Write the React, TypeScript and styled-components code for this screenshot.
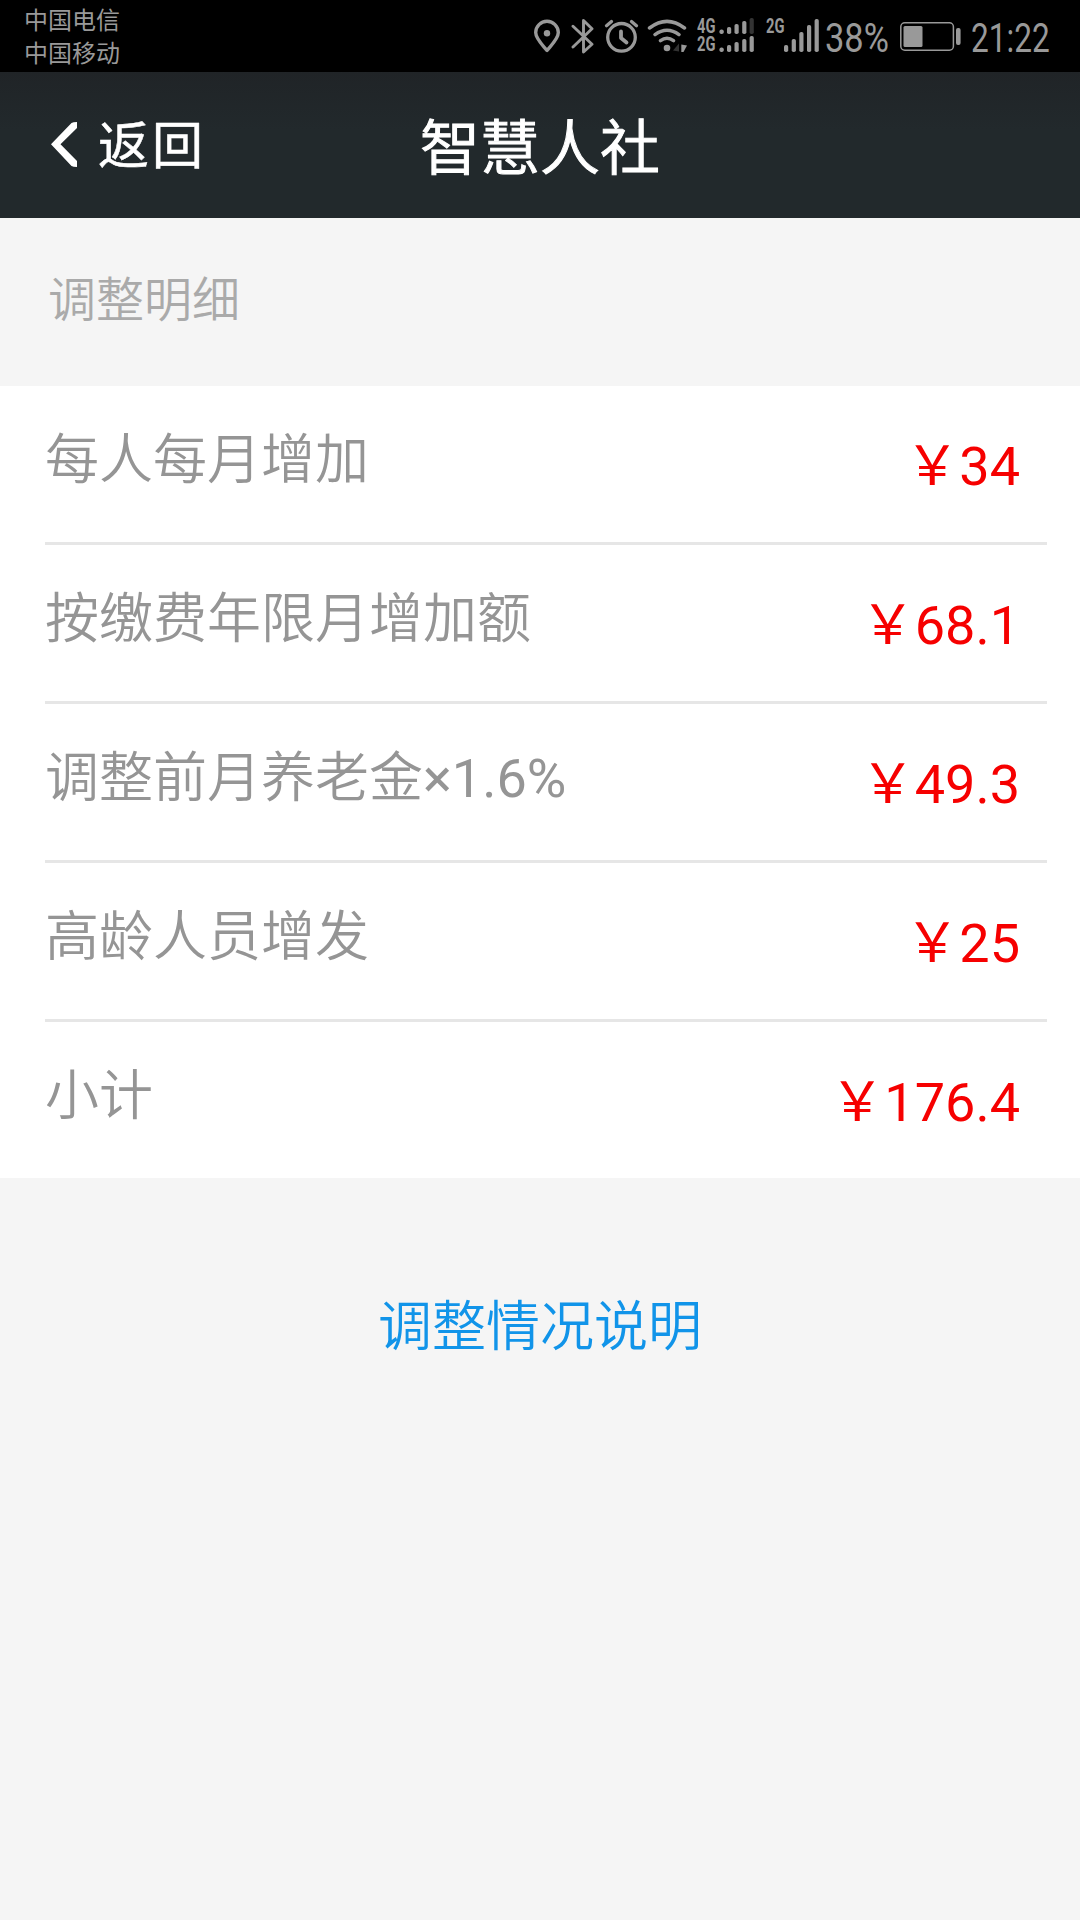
import React from 'react';
import styled, { createGlobalStyle } from 'styled-components';

const GlobalStyle = createGlobalStyle`
  *, *::before, *::after { box-sizing: border-box; }
  body {
    margin: 0;
    background: #f5f5f5;
    font-family: Roboto, 'Noto Sans CJK SC', sans-serif;
  }
`;

const Screen = styled.div`
  display: flex;
  flex-direction: column;
  width: 1080px;
  height: 1920px;
  overflow: hidden;
  background: #f5f5f5;
`;

const StatusBar = styled.div`
  display: flex;
  justify-content: space-between;
  height: 72px;
  padding: 0 31px 0 24px;
  background: #000;
  color: #999;
`;

const Carriers = styled.div`
  padding-top: 2px;
  font: 400 24px/33px 'Noto Sans CJK SC', sans-serif;
  white-space: nowrap;
`;

const StatusIcons = styled.div`
  display: flex;
  align-items: flex-start;
  padding-top: 17px;
`;

const Glyph = styled.svg<{ $gap?: number }>`
  display: block;
  flex: none;
  margin-left: ${(p) => p.$gap ?? 0}px;
  fill: none;
  stroke: #999;
  stroke-linecap: round;
  stroke-linejoin: round;
`;

const StatusText = styled.div<{ $width: number; $gap: number; $scale: number }>`
  flex: none;
  width: ${(p) => p.$width}px;
  margin-left: ${(p) => p.$gap}px;
  padding-top: 1px;
  font: 400 40px/41px Roboto, sans-serif;
  white-space: nowrap;

  span {
    display: inline-block;
    transform: scaleX(${(p) => p.$scale});
    transform-origin: 0 0;
  }
`;

const NetworkTypes = styled.div<{ $gap: number; $width: number }>`
  display: flex;
  flex-direction: column;
  flex: none;
  width: ${(p) => p.$width}px;
  margin-left: ${(p) => p.$gap}px;
  font: 700 21px/18px Roboto, sans-serif;

  span {
    transform: scaleX(0.7);
    transform-origin: 0 0;
  }
`;

const Header = styled.header`
  display: grid;
  grid-template-columns: 1fr auto 1fr;
  height: 146px;
  padding-left: 51px;
  background: linear-gradient(#202427, #22292c 40%);
  color: #fff;
  font-family: 'Noto Sans CJK SC', sans-serif;
  white-space: nowrap;
`;

const BackButton = styled.button`
  display: flex;
  align-items: flex-start;
  gap: 21px;
  margin: 0;
  padding: 34px 0 0;
  border: 0;
  background: none;
  color: inherit;
  font: 400 51px/72px 'Noto Sans CJK SC', sans-serif;
  letter-spacing: 3px;
  -webkit-text-stroke: 0.5px #fff;

  svg { margin-top: 16px; }
`;

const Title = styled.h1`
  margin: 0;
  padding: 36px 0 0;
  margin-left: -51px;
  font-size: 60px;
  font-weight: 350;
  line-height: 72px;
  -webkit-text-stroke: 1px #fff;
  stroke-linejoin: round;
`;

const SectionLabel = styled.h2`
  height: 168px;
  margin: 0;
  padding: 47px 48px 0;
  color: #aaa;
  font-size: 48px;
  font-weight: 350;
  line-height: 72px;
`;

const List = styled.dl`
  margin: 0;
  padding: 0 33px 0 45px;
  background: #fff;
`;

const Row = styled.div`
  display: flex;
  justify-content: space-between;
  height: 159px;
  padding-right: 27px;
  border-bottom: 3px solid #e6e6e6;
  font-size: 54px;
  line-height: 72px;

  &:last-child {
    height: 156px;
    border-bottom: 0;
  }
`;

const Label = styled.dt`
  padding-top: 39px;
  color: #959595;
  font-weight: 350;
`;

const Latin = styled.span`
  font-weight: 400;
`;

const Amount = styled.dd`
  margin: 0;
  padding-top: 45px;
  color: #f60000;
  font-weight: 400;
`;

const ExplainLink = styled.a`
  align-self: center;
  margin-top: 114px;
  color: #1194e9;
  font-size: 54px;
  font-weight: 350;
  line-height: 72px;
`;

const items = [
  { label: '每人每月增加', amount: '34' },
  { label: '按缴费年限月增加额', amount: '68.1' },
  { label: '调整前月养老金', factor: '×1.6%', amount: '49.3' },
  { label: '高龄人员增发', amount: '25' },
  { label: '小计', amount: '176.4' },
];

function Bar({ x, top, bottom, off }: { x: number; top: number; bottom: number; off?: boolean }) {
  return <rect x={x} y={top} width={4.2} height={bottom - top} rx={1.8} fill={off ? '#333' : '#999'} stroke="none" />;
}

export default function App() {
  return (
    <>
      <GlobalStyle />
      <Screen>
        <StatusBar>
          <Carriers>
            <div>中国电信</div>
            <div>中国移动</div>
          </Carriers>
          <StatusIcons>
            <Glyph width="27" height="37" viewBox="534 17 27 37" strokeWidth="3.4">
              <path d="M547 50.5C543 45.5 535.7 39 535.7 32.6a11.3 11.3 0 0 1 22.6 0C558.3 39 551 45.5 547 50.5Z" />
              <circle cx="547" cy="33.3" r="3.2" fill="#999" stroke="none" />
            </Glyph>
            <Glyph $gap={10} width="23" height="37" viewBox="571 17 23 37" strokeWidth="2.9">
              <path d="M573 26.3 592 44.2 583.5 52V20.5L592 28.8 573 47" />
            </Glyph>
            <Glyph $gap={10} width="35" height="37" viewBox="604 17 35 37" strokeWidth="3.3">
              <circle cx="621.5" cy="37.3" r="13.8" />
              <path d="M606.5 25.8 611.5 21.6M631.5 21.6 636.5 25.8" />
              <path d="M621 31.5V38L626.5 42.5" strokeWidth="3.8" />
            </Glyph>
            <Glyph $gap={8} width="41" height="37" viewBox="647 17 41 37" strokeWidth="3.5">
              <path d="M649.5 28Q667 14.8 684.5 28M655 34.6Q667 26 679 34.6M660.5 40.7Q667 35.8 673.5 40.7" />
              <circle cx="667" cy="48" r="3.3" fill="#999" stroke="none" />
              <path d="M673 50.5 679 43.5V51.5Z" fill="#333" stroke="none" />
              <path d="M681.3 44.5 687 45.5 683.5 52H681.3Z" fill="#999" stroke="none" />
            </Glyph>
            <NetworkTypes $gap={9} $width={22}>
              <span>4G</span>
              <span>2G</span>
            </NetworkTypes>
            <Glyph width="36" height="37" viewBox="719 17 36 37">
              <Bar x={719.5} top={29.5} bottom={34} />
              <Bar x={727} top={27} bottom={34} />
              <Bar x={734.5} top={24} bottom={34} />
              <Bar x={742.2} top={21} bottom={34} />
              <Bar x={749.6} top={18} bottom={34} off />
              <Bar x={719.5} top={47.5} bottom={52} />
              <Bar x={727} top={45} bottom={52} />
              <Bar x={734.5} top={42} bottom={52} />
              <Bar x={742.2} top={39} bottom={52} />
              <Bar x={749.6} top={36} bottom={52} />
            </Glyph>
            <NetworkTypes $gap={11} $width={18}>
              <span>2G</span>
            </NetworkTypes>
            <Glyph width="36" height="37" viewBox="784 17 36 37">
              <Bar x={784} top={45} bottom={52} />
              <Bar x={791.7} top={39} bottom={52} />
              <Bar x={799.3} top={32} bottom={52} />
              <Bar x={807} top={25} bottom={52} />
              <Bar x={814.6} top={19} bottom={52} />
            </Glyph>
            <StatusText $gap={5} $width={75} $scale={0.86}>
              <span>38%</span>
            </StatusText>
            <Glyph width="61" height="37" viewBox="900 17 61 37">
              <rect x="900.8" y="22.8" width="52.6" height="27.4" rx="4" strokeWidth="1.5" />
              <rect x="903.5" y="26" width="19" height="21" rx="1.5" fill="#999" stroke="none" />
              <rect x="956" y="28" width="4.6" height="17" rx="2" fill="#999" stroke="none" />
            </Glyph>
            <StatusText $gap={10} $width={78} $scale={0.79}>
              <span>21:22</span>
            </StatusText>
          </StatusIcons>
        </StatusBar>

        <Header>
          <BackButton>
            <svg width="26" height="45" viewBox="0 0 26 45" fill="#fff">
              <path d="M0 22.3 20.5 1Q22 0 26 0V6L9.5 22.3 26 39V45Q22 45 20.5 44Z" />
            </svg>
            返回
          </BackButton>
          <Title>智慧人社</Title>
        </Header>

        <SectionLabel>调整明细</SectionLabel>

        <List>
          {items.map((item) => (
            <Row key={item.label}>
              <Label>
                {item.label}
                {item.factor && <Latin>{item.factor}</Latin>}
              </Label>
              <Amount>￥{item.amount}</Amount>
            </Row>
          ))}
        </List>

        <ExplainLink>调整情况说明</ExplainLink>
      </Screen>
    </>
  );
}
